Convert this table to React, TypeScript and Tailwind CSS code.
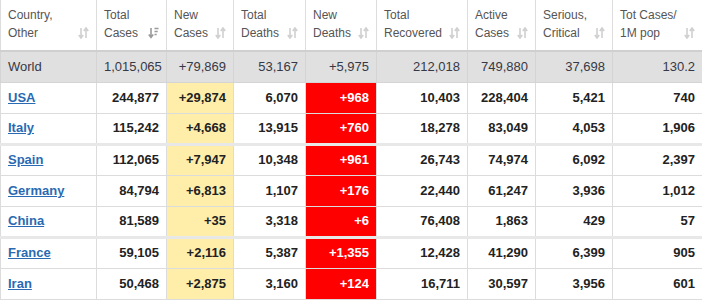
import clsx from 'clsx'

const cols = [
  { w: 96, l1: 'Country,', l2: 'Other' },
  { w: 70, l1: 'Total', l2: 'Cases', sorted: true },
  { w: 67, l1: 'New', l2: 'Cases' },
  { w: 72, l1: 'Total', l2: 'Deaths' },
  { w: 71, l1: 'New', l2: 'Deaths' },
  { w: 91, l1: 'Total', l2: 'Recovered' },
  { w: 68, l1: 'Active', l2: 'Cases' },
  { w: 77, l1: 'Serious,', l2: 'Critical' },
  { w: 90, l1: 'Tot Cases/', l2: '1M pop' },
]

const world = ['World', '1,015,065', '+79,869', '53,167', '+5,975', '212,018', '749,880', '37,698', '130.2']

const rows = [
  { c: ['USA', '244,877', '+29,874', '6,070', '+968', '10,403', '228,404', '5,421', '740'] },
  { c: ['Italy', '115,242', '+4,668', '13,915', '+760', '18,278', '83,049', '4,053', '1,906'] },
  { c: ['Spain', '112,065', '+7,947', '10,348', '+961', '26,743', '74,974', '6,092', '2,397'], thick: true },
  { c: ['Germany', '84,794', '+6,813', '1,107', '+176', '22,440', '61,247', '3,936', '1,012'] },
  { c: ['China', '81,589', '+35', '3,318', '+6', '76,408', '1,863', '429', '57'] },
  { c: ['France', '59,105', '+2,116', '5,387', '+1,355', '12,428', '41,290', '6,399', '905'], thick: true },
  { c: ['Iran', '50,468', '+2,875', '3,160', '+124', '16,711', '30,597', '3,956', '601'] },
]

function SortIcon({ active }: { active?: boolean }) {
  if (active) {
    return (
      <svg width="11" height="12" viewBox="0 0 11 12" className="shrink-0">
        <path d="M3 1v9M0.8 7.5L3 10.5 5.2 7.5" stroke="#9a9a9a" strokeWidth="1.6" fill="none" />
        <path d="M6.5 1.5h4M6.5 4.5h3.2M6.5 7.5h2.2" stroke="#9a9a9a" strokeWidth="1.6" />
      </svg>
    )
  }
  return (
    <svg width="11" height="12" viewBox="0 0 11 12" className="shrink-0">
      <path d="M3 1v10M0.8 8L3 11 5.2 8" stroke="#d0d0d0" strokeWidth="1.6" fill="none" />
      <path d="M8 11V1M5.8 4L8 1 10.2 4" stroke="#d0d0d0" strokeWidth="1.6" fill="none" />
    </svg>
  )
}

export default function App() {
  return (
    <div className="w-[702px] h-[302px] overflow-hidden bg-white" style={{ fontFamily: '"Liberation Sans", Arial, sans-serif' }}>
      <table className="table-fixed border-collapse w-[702px] text-[13px]">
        <colgroup>
          {cols.map((c, i) => (
            <col key={i} style={{ width: c.w }} />
          ))}
        </colgroup>
        <thead>
          <tr className="h-[48px] border-b-2 border-[#cfcfcf]">
            {cols.map((c, i) => (
              <th key={i} className="border-x border-[#dddddd] px-[7px] pt-[6px] pb-[8px] text-left align-top font-normal text-[12px] leading-[18px] text-[#555]">
                <div>{c.l1}</div>
                <div className="flex items-center justify-between">
                  <span>{c.l2}</span>
                  <SortIcon active={c.sorted} />
                </div>
              </th>
            ))}
          </tr>
        </thead>
        <tbody>
          <tr className="h-[31px] bg-[#e0e0e0] border-b border-[#d4d4d4] text-[#363945]">
            {world.map((v, i) => (
              <td key={i} className={clsx('border-x border-[#d4d4d4] px-[7px]', i === 0 ? 'text-left' : 'text-right')}>
                {v}
              </td>
            ))}
          </tr>
          {rows.map((r, ri) => (
            <tr key={ri} className={clsx('h-[31px] border-b border-[#dcdcdc] font-bold text-[#222]', r.thick && 'border-t-[3px] border-t-[#e8e8e8]')}>
              {r.c.map((v, i) => (
                <td
                  key={i}
                  className={clsx(
                    'border-x border-[#dcdcdc] px-[7px]',
                    i === 0 ? 'text-left' : 'text-right',
                    i === 2 && 'bg-[#ffeeaa]',
                    i === 4 && 'bg-[#ff0000] text-white'
                  )}
                >
                  {i === 0 ? <span className="text-[#2a6ab3] underline">{v}</span> : v}
                </td>
              ))}
            </tr>
          ))}
        </tbody>
      </table>
    </div>
  )
}
